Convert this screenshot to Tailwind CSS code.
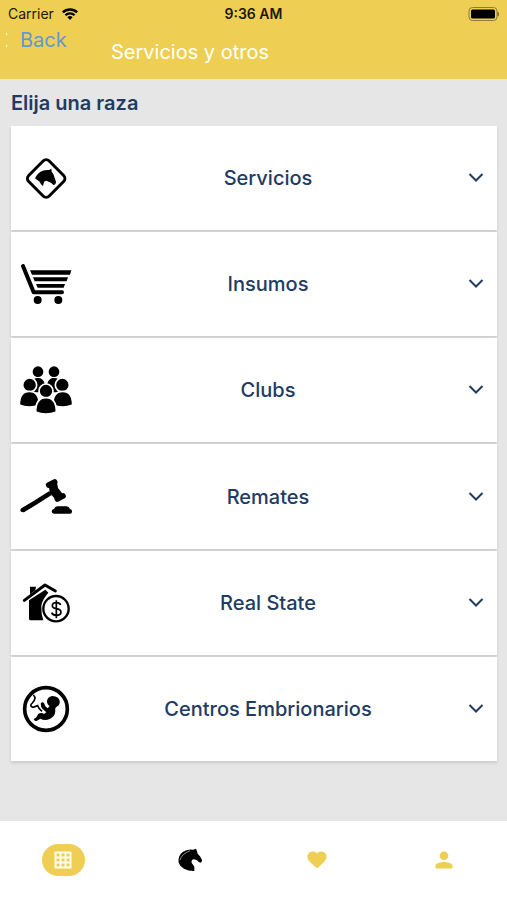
<!DOCTYPE html>
<html lang="es">
<head>
<meta charset="utf-8">
<meta name="viewport" content="width=device-width, initial-scale=1">
<title>Servicios y otros</title>
<script src="https://cdn.jsdelivr.net/npm/@tailwindcss/browser@4"></script>
</head>
<body class="flex min-h-screen flex-col bg-[#e6e6e6] font-['Inter','Liberation_Sans',sans-serif] text-[#213b63]">
<header class="bg-[#eecf53]">
  <div class="grid h-7 grid-cols-3 items-center px-2 text-[14px] leading-5 text-[#1c1808]">
    <div class="flex items-center gap-2">
      <span>Carrier</span>
      <svg class="h-3 w-4" viewBox="0 0 16 12" aria-hidden="true"><g fill="none" stroke="#000" stroke-width="2.3"><path d="M.8 4.4a10.4 10.4 0 0 1 14.4 0"/><path d="M3.4 7.3a6.6 6.6 0 0 1 9.2 0"/></g><path d="M5.4 9.3a3.8 3.8 0 0 1 5.2 0L8 12z"/></svg>
    </div>
    <span class="text-center font-semibold">9:36 AM</span>
    <svg class="h-[14px] w-8 justify-self-end" viewBox="0 0 32 14" aria-hidden="true"><rect x="2" y=".5" width="28" height="13" rx="3.5" fill="none" stroke="#8f7d36"/><rect x="4" y="2.500" width="24" height="9" rx="1.500"/><path d="M30.500 4.500q1.500 .5 1.500 2.500t-1.500 2.500z" fill="#6f6129"/></svg>
  </div>
  <nav class="flex h-[51px] items-start text-[20px] leading-6">
    <a href="#" class="flex w-[111px] items-center gap-3 pl-[6px] text-[#6199cf]">
      <svg class="h-4 w-[2px]" viewBox="0 0 2 16" fill="#fff8dc" aria-hidden="true"><path d="M0 1h1v2H0zM0 13h1v2H0z"/></svg>
      <span>Back</span>
    </a>
    <h1 class="pt-3 text-white">Servicios y otros</h1>
  </nav>
</header>

<main class="flex flex-1 flex-col pr-[10px] pb-[60px] pl-[11px]">
  <h2 class="flex h-[47px] items-center text-[20px] font-semibold">Elija una raza</h2>
  <div class="grid flex-1 auto-rows-fr gap-[2px]">
    <button class="flex min-h-20 items-center bg-white pr-[9px] shadow-[0_2px_3px_#0000001f]">
      <svg class="size-[75px]" viewBox="3 0 225 225" aria-hidden="true"><rect x="65" y="69" width="87" height="87" rx="13" transform="rotate(45 108.500 112.500)" fill="none" stroke="#000" stroke-width="9"/><path d="M75 112Q82 96 98 89Q107 86 117 87L124 83L125 92L130 99L138 122Q138 131 130 132L123 125L109 119Q101 120 101 127L99 136L93 130L89 122Z"/></svg>
      <span class="flex-1 text-[20px] font-medium">Servicios</span>
      <svg class="ml-[14px] size-6" viewBox="0 0 24 24" fill="none" stroke="currentColor" stroke-width="2" aria-hidden="true"><path d="m5.500 8 6.500 6.500L18.500 8"/></svg>
    </button>
    <button class="flex min-h-20 items-center bg-white pr-[9px] shadow-[0_2px_3px_#0000001f]">
      <svg class="size-[75px]" viewBox="3 -10 225 225" aria-hidden="true"><path d="M39 47 71 126H156" fill="none" stroke="#000" stroke-width="12" stroke-linecap="round" stroke-linejoin="round"/><path d="M60 60H184L180 73H66ZM69 81H174L170 93H74ZM78 101H165L161 112H83Z"/><circle cx="83" cy="149" r="12"/><circle cx="145" cy="149" r="12"/></svg>
      <span class="flex-1 text-[20px] font-medium">Insumos</span>
      <svg class="ml-[14px] size-6" viewBox="0 0 24 24" fill="none" stroke="currentColor" stroke-width="2" aria-hidden="true"><path d="m5.500 8 6.500 6.500L18.500 8"/></svg>
    </button>
    <button class="flex min-h-20 items-center bg-white pr-[9px] shadow-[0_2px_3px_#0000001f]">
      <svg class="size-[75px]" viewBox="3 0 225 225" aria-hidden="true"><circle cx="84" cy="56" r="16"/><circle cx="132" cy="56" r="16"/><path d="M64 118V90Q68 75 84 75T104 92V118ZM112 118V92Q116 75 132 75T152 90V118Z"/><g stroke="#fff" stroke-width="5"><circle cx="59" cy="96" r="21"/><circle cx="157" cy="96" r="21"/><path d="M28 156Q28 115 58 115T88 156Q58 169 28 156ZM128 156Q128 115 158 115T188 156Q158 169 128 156Z"/><circle cx="108" cy="114" r="21"/><path d="M77 177Q77 134 108 134T139 177Q108 189 77 177Z"/></g></svg>
      <span class="flex-1 text-[20px] font-medium">Clubs</span>
      <svg class="ml-[14px] size-6" viewBox="0 0 24 24" fill="none" stroke="currentColor" stroke-width="2" aria-hidden="true"><path d="m5.500 8 6.500 6.500L18.500 8"/></svg>
    </button>
    <button class="flex min-h-20 items-center bg-white pr-[9px] shadow-[0_2px_3px_#0000001f]">
      <svg class="size-[75px]" viewBox="3 -3 225 225" aria-hidden="true"><path d="M34 145 72 122 117 94 125 105 79 134 42 157Q30 158 31 149ZM116 72 140 63 144 84 160 104 136 118 119 98Z"/><path d="m116 75 18-9M142 117l17-9" stroke="#000" stroke-width="17" stroke-linecap="round"/><path d="M132 147Q135 139 142 139H169Q177 139 180 147Q187 149 186 155Q186 161 180 161H131Q125 160 125 154T132 147Z"/></svg>
      <span class="flex-1 text-[20px] font-medium">Remates</span>
      <svg class="ml-[14px] size-6" viewBox="0 0 24 24" fill="none" stroke="currentColor" stroke-width="2" aria-hidden="true"><path d="m5.500 8 6.500 6.500L18.500 8"/></svg>
    </button>
    <button class="flex min-h-20 items-center bg-white pr-[9px] shadow-[0_2px_3px_#0000001f]">
      <svg class="size-[75px]" viewBox="3 0 225 225" aria-hidden="true"><path d="M60 65H78L76 76 60 88ZM57 106 106 74 115 83Q97 103 94 122 93 147 100 166H62Q57 166 57 161Z"/><path d="M43 106 105 60 136 78" fill="none" stroke="#000" stroke-width="9" stroke-linecap="round" stroke-linejoin="round"/><circle cx="138" cy="131" r="38" fill="#fff" stroke="#000" stroke-width="7"/><path d="M152 120Q149 113 139 113 127 113 127 122 127 129 139 131 153 133 153 142 152 151 139 151 128 151 125 143M139 106V160" fill="none" stroke="#000" stroke-width="5"/></svg>
      <span class="flex-1 text-[20px] font-medium">Real State</span>
      <svg class="ml-[14px] size-6" viewBox="0 0 24 24" fill="none" stroke="currentColor" stroke-width="2" aria-hidden="true"><path d="m5.500 8 6.500 6.500L18.500 8"/></svg>
    </button>
    <button class="flex min-h-20 items-center bg-white pr-[9px] shadow-[0_2px_3px_#0000001f]">
      <svg class="size-[75px]" viewBox="3 -3 225 225" aria-hidden="true"><circle cx="108" cy="111" r="64" fill="none" stroke="#000" stroke-width="11"/><path d="M111 87Q113 73 128 72 145 73 149 86 151 98 140 104 134 107 136 118 135 134 119 141 104 147 91 140L81 146Q74 149 71 142L79 136 85 125Q96 120 102 126L109 121 98 111Q92 106 92 95Q96 88 102 93L106 103 113 109 119 102Q111 98 111 87Z"/><path d="M70 69Q81 79 67 93 57 102 69 106L83 101Q85 109 96 118" fill="none" stroke="#000" stroke-width="5"/></svg>
      <span class="flex-1 text-[20px] font-medium">Centros Embrionarios</span>
      <svg class="ml-[14px] size-6" viewBox="0 0 24 24" fill="none" stroke="currentColor" stroke-width="2" aria-hidden="true"><path d="m5.500 8 6.500 6.500L18.500 8"/></svg>
    </button>
  </div>
</main>

<nav class="grid h-[79px] grid-cols-4 place-items-center bg-white pb-[2px] text-[#eecf53]">
  <a href="#" aria-label="Servicios" class="flex h-8 w-[43px] items-center justify-center rounded-full bg-[#eecf53]">
    <svg class="size-[18px]" viewBox="0 0 18 18" aria-hidden="true"><rect x=".5" y=".5" width="17" height="17" rx="1" fill="#fffdf0"/><path fill="#eecf53" d="M2.500 2.500h3v3h-3zM7.500 2.500h3v3h-3zM12.500 2.500h3v3h-3zM2.500 7.500h3v3h-3zM7.500 7.500h3v3h-3zM12.500 7.500h3v3h-3zM2.500 12.500h3v3h-3zM7.500 12.500h3v3h-3zM12.500 12.500h3v3h-3z"/></svg>
  </a>
  <a href="#" aria-label="Caballos">
    <svg class="size-6" viewBox="0 0 72 72" aria-hidden="true"><path d="M2 44Q-1 24 14 12 28 2 46 5L54 2 57 10 59 17 67 26 73 38 68 44 62 42 57 37 48 34Q39 34 41 44L49 56 49 69Q33 70 18 62 5 54 2 44Z"/><path d="M6 36Q11 18 36 8" fill="none" stroke="#ccc" stroke-width="2"/></svg>
  </a>
  <a href="#" aria-label="Favoritos">
    <svg class="h-[18px] w-5" viewBox="0 0 20 18" fill="currentColor" aria-hidden="true"><path d="M10 17.500 2.200 10.200C-.6 7 .3 3.100 2.400 1.500 4.900 0 8 .3 10 2.500c2-2.200 5.100-2.500 7.600-1 2.100 1.600 3 5.500.2 8.700z"/></svg>
  </a>
  <a href="#" aria-label="Perfil">
    <svg class="size-[18px]" viewBox="0 0 18 18" fill="currentColor" aria-hidden="true"><circle cx="9" cy="4.800" r="4.300"/><path d="M.5 17.500V15c0-3 5-4 8.500-4s8.500 1 8.500 4v2.500z"/></svg>
  </a>
</nav>
</body>
</html>
